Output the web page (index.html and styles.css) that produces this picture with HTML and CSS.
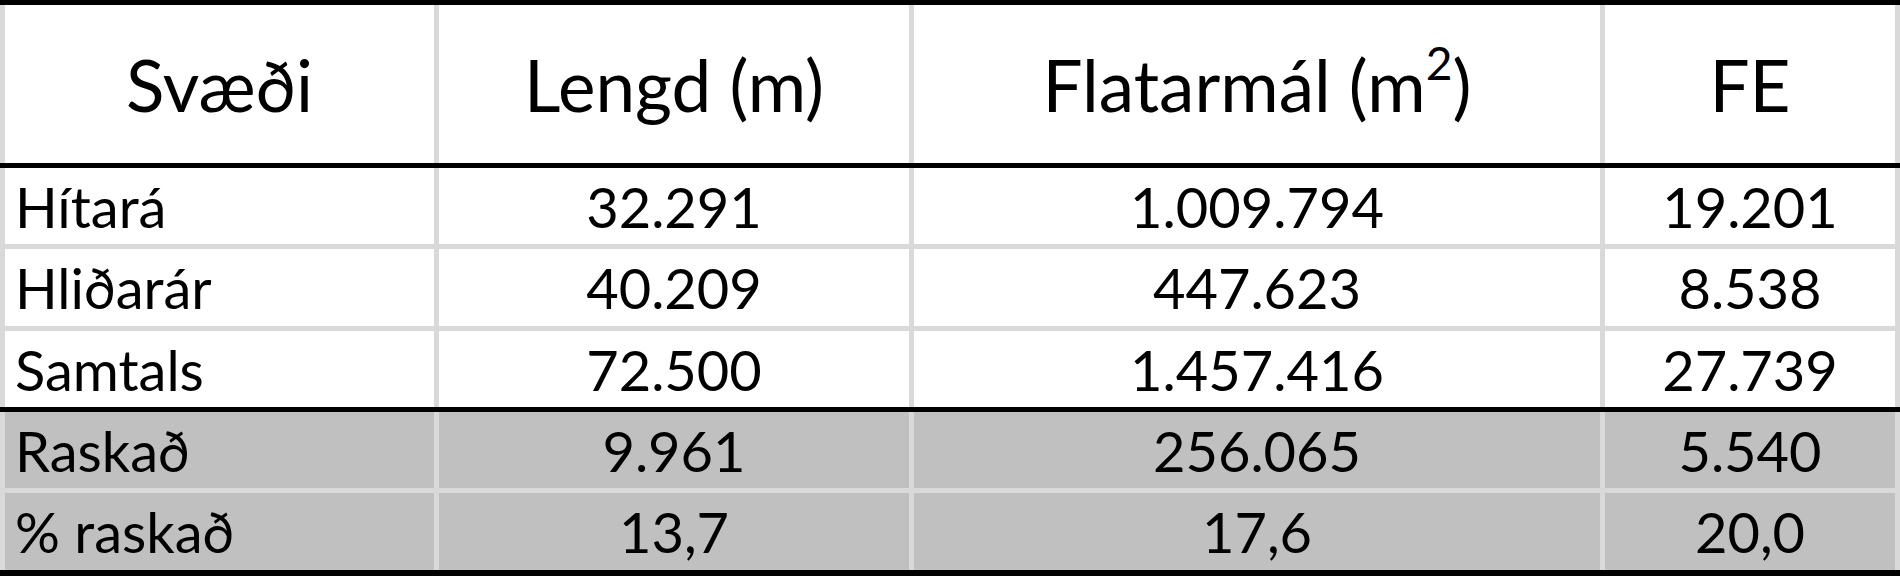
FILE: index.html
```html
<!DOCTYPE html>
<html lang="is">
<head>
    <meta charset="UTF-8">
    <meta name="viewport" content="width=device-width, initial-scale=1.0">
    <title>Svæði</title>
    <link rel="stylesheet" href="styles.css">
</head>
<body>
    <div class="sheet">
        <div class="row head">
            <div class="cell">Svæði</div>
            <div class="cell">Lengd (m)</div>
            <div class="cell"><span>Flatarmál (m<sup>2</sup>)</span></div>
            <div class="cell">FE</div>
        </div>

        <div class="row break">
            <div class="cell name">Hítará</div>
            <div class="cell">32.291</div>
            <div class="cell">1.009.794</div>
            <div class="cell">19.201</div>
        </div>
        <div class="row tall">
            <div class="cell name">Hliðarár</div>
            <div class="cell">40.209</div>
            <div class="cell">447.623</div>
            <div class="cell">8.538</div>
        </div>
        <div class="row">
            <div class="cell name">Samtals</div>
            <div class="cell">72.500</div>
            <div class="cell">1.457.416</div>
            <div class="cell">27.739</div>
        </div>

        <div class="row break shade">
            <div class="cell name">Raskað</div>
            <div class="cell">9.961</div>
            <div class="cell">256.065</div>
            <div class="cell">5.540</div>
        </div>
        <div class="row tall shade">
            <div class="cell name">% raskað</div>
            <div class="cell">13,7</div>
            <div class="cell">17,6</div>
            <div class="cell">20,0</div>
        </div>
    </div>
</body>
</html>
```

FILE: styles.css
```css
body {
    margin: 0;
    background-color: #fff;
    color: #000;
    font-family: Lato, "Open Sans", sans-serif;
}
.sheet {
    width: 1900px;
    border-top: 5px solid #000;
    border-bottom: 6px solid #000;
}
.row {
    display: grid;
    grid-template-columns: 429px 470px 686px 290px;
    column-gap: 5px;
    padding: 0 5px;
    height: 76px;
    background-color: #d9d9d9;
    font-size: 56px;
}
.row + .row {
    border-top: 5px solid #d9d9d9;
}
.row.break {
    border-top-color: #000;
}
.row.tall {
    height: 77px;
}
.head {
    height: 158px;
    font-size: 71px;
}
.cell {
    display: flex;
    align-items: center;
    justify-content: center;
    background-color: #fff;
    white-space: nowrap;
}
.cell.name {
    justify-content: flex-start;
    padding-left: 10px;
}
.shade .cell {
    background-color: #c0c0c0;
}
sup {
    font-size: 0.65em;
    line-height: 0;
    vertical-align: 0.7em;
}
```
